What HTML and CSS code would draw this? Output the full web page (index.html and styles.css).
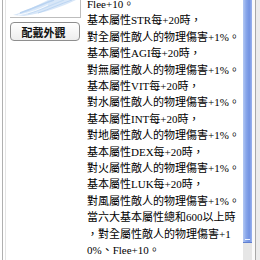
FILE: index.html
```html
<!DOCTYPE html>
<html>
<head>
    <title>配戴外觀</title>
    <meta charset="utf-8">
    <link rel="stylesheet" href="styles.css">
</head>
<body>
    <div class="window">
        <div class="side">
            <div class="preview">
                <svg width="70" height="17" viewBox="0 0 70 17">
                    <path d="M3 15 C14 12 26 6 38 0 L66 0 C52 7 34 13 14 16 Z" fill="#d8e7f8"/>
                    <path d="M10 13 C22 9 32 4 44 0" stroke="#b9d3f1" stroke-width="1.5" fill="none"/>
                    <path d="M18 14 C30 10 42 5 54 0" stroke="#c4dbf4" stroke-width="1.2" fill="none"/>
                    <path d="M28 13 C40 9 50 4 62 0" stroke="#bcd5f2" stroke-width="1" fill="none"/>
                    <path d="M8 15 C20 13 30 9 38 5" stroke="#ffffff" stroke-width="0.8" fill="none"/>
                </svg>
            </div>
            <button class="look">配戴外觀</button>
        </div>
        <div class="desc">
            <div class="lines">
                Flee+10。<br>
                基本屬性STR每+20時，<br>
                對全屬性敵人的物理傷害+1%。<br>
                基本屬性AGI每+20時，<br>
                對無屬性敵人的物理傷害+1%。<br>
                基本屬性VIT每+20時，<br>
                對水屬性敵人的物理傷害+1%。<br>
                基本屬性INT每+20時，<br>
                對地屬性敵人的物理傷害+1%。<br>
                基本屬性DEX每+20時，<br>
                對火屬性敵人的物理傷害+1%。<br>
                基本屬性LUK每+20時，<br>
                對風屬性敵人的物理傷害+1%。<br>
                當六大基本屬性總和600以上時<br>
                ，對全屬性敵人的物理傷害+1<br>
                0%、Flee+10。
            </div>
        </div>
        <div class="scroll">
            <div class="bar">
                <div class="thumb"><span class="grip"></span></div>
                <div class="track"></div>
            </div>
            <div class="gap"></div>
            <div class="edge"></div>
            <div class="frame"></div>
        </div>
    </div>
</body>
</html>
```

FILE: styles.css
```css
body {
    margin: 0;
    background-color: #fff;
}
.window {
    display: flex;
    width: 260px;
    height: 260px;
    overflow: hidden;
    background-color: #fff;
}
.side {
    width: 84px;
    margin-left: 2px;
    padding-left: 7px;
    border-left: 1px solid #b0b0b0;
    box-shadow: inset 2px 0 0 #fff, inset 3px 0 0 #e4e4e4;
    box-sizing: border-box;
}
.preview {
    width: 70px;
    height: 17px;
    border-right: 1px solid #bdbdbd;
    border-bottom: 1px solid #bdbdbd;
    background-color: #fff;
}
.preview svg {
    display: block;
}
.look {
    display: block;
    width: 70px;
    height: 19px;
    margin-top: 4px;
    padding: 0 3px 0 0;
    font-family: "Noto Sans CJK TC", sans-serif;
    font-size: 11px;
    font-weight: bold;
    color: #111;
    background: linear-gradient(#ffffff, #ededed);
    border: 1px solid #8e8e8e;
    border-radius: 4px;
}
.desc {
    flex: 1;
    padding-left: 1px;
    overflow: hidden;
}
.lines {
    margin-top: -4px;
    font-family: "Liberation Serif", "Noto Sans CJK TC", serif;
    font-size: 11px;
    line-height: 16.4px;
    white-space: nowrap;
    color: #000;
}
.scroll {
    display: flex;
    width: 17px;
}
.bar {
    display: flex;
    flex-direction: column;
    width: 9px;
}
.thumb {
    position: relative;
    height: 243px;
    background: linear-gradient(to right, #b4c9f3, #88a6ea 35%, #7393e2 70%, #9ab3ee);
    border-bottom: 1px solid #5f7fd0;
    box-sizing: border-box;
}
.grip {
    position: absolute;
    left: 2px;
    bottom: 2px;
    width: 5px;
    height: 1px;
    background-color: #eef3ff;
}
.track {
    flex: 1;
    background-color: #e6e6e6;
}
.gap {
    width: 3px;
    background-color: #fafafa;
}
.edge {
    width: 1px;
    background-color: #a8a8a8;
}
.frame {
    flex: 1;
    background-color: #ececec;
}
```
